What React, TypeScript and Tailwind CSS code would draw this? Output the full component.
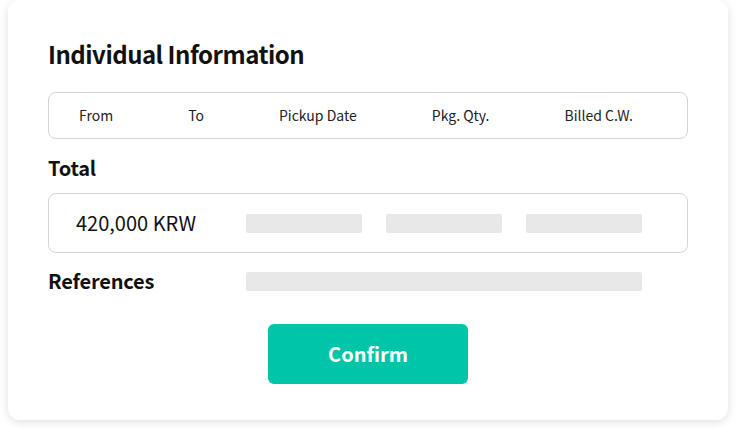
const font = { fontFamily: '"Noto Sans CJK KR", "Noto Sans", sans-serif' };

const columns = ['From', 'To', 'Pickup Date', 'Pkg. Qty.', 'Billed C.W.'];

function Placeholder({ className = '' }: { className?: string }) {
  return <div className={`h-[19px] rounded-[2px] bg-[#e8e8e8] ${className}`} />;
}

export default function App() {
  return (
    <div className="h-[436px] w-[744px] bg-white" style={font}>
      <div className="ml-2 flex h-[420px] w-[720px] flex-col rounded-xl bg-white px-10 shadow-[0_2px_10px_rgba(0,0,0,0.13)]">
        <h2 className="mt-[38px] text-[24px] leading-[32px] font-semibold tracking-[-0.5px] text-[#111]">
          Individual Information
        </h2>

        <div className="mt-[22px] flex h-[47px] items-center gap-[75px] rounded-lg border border-[#d4d4d4] pl-[30px] text-[14px] text-[#222]">
          {columns.map((c) => (
            <span key={c}>{c}</span>
          ))}
        </div>

        <h3 className="mt-[15px] text-[20px] leading-[28px] font-semibold tracking-[-0.2px] text-[#111]">Total</h3>

        <div className="mt-[11px] flex h-[60px] items-center rounded-lg border border-[#d4d4d4] pl-[27px]">
          <span className="w-[170px] text-[20px] text-[#111]">420,000 KRW</span>
          <div className="flex gap-6">
            <Placeholder className="w-[116px]" />
            <Placeholder className="w-[116px]" />
            <Placeholder className="w-[116px]" />
          </div>
        </div>

        <div className="mt-[16px] flex h-[24px] items-center">
          <span className="w-[198px] text-[20px] font-semibold tracking-[-0.2px] text-[#111]">References</span>
          <Placeholder className="w-[396px]" />
        </div>

        <button className="mx-auto mt-[31px] h-[60px] w-[200px] rounded-md bg-[#00c5a8] text-[20px] font-bold text-white">
          Confirm
        </button>
      </div>
    </div>
  );
}
